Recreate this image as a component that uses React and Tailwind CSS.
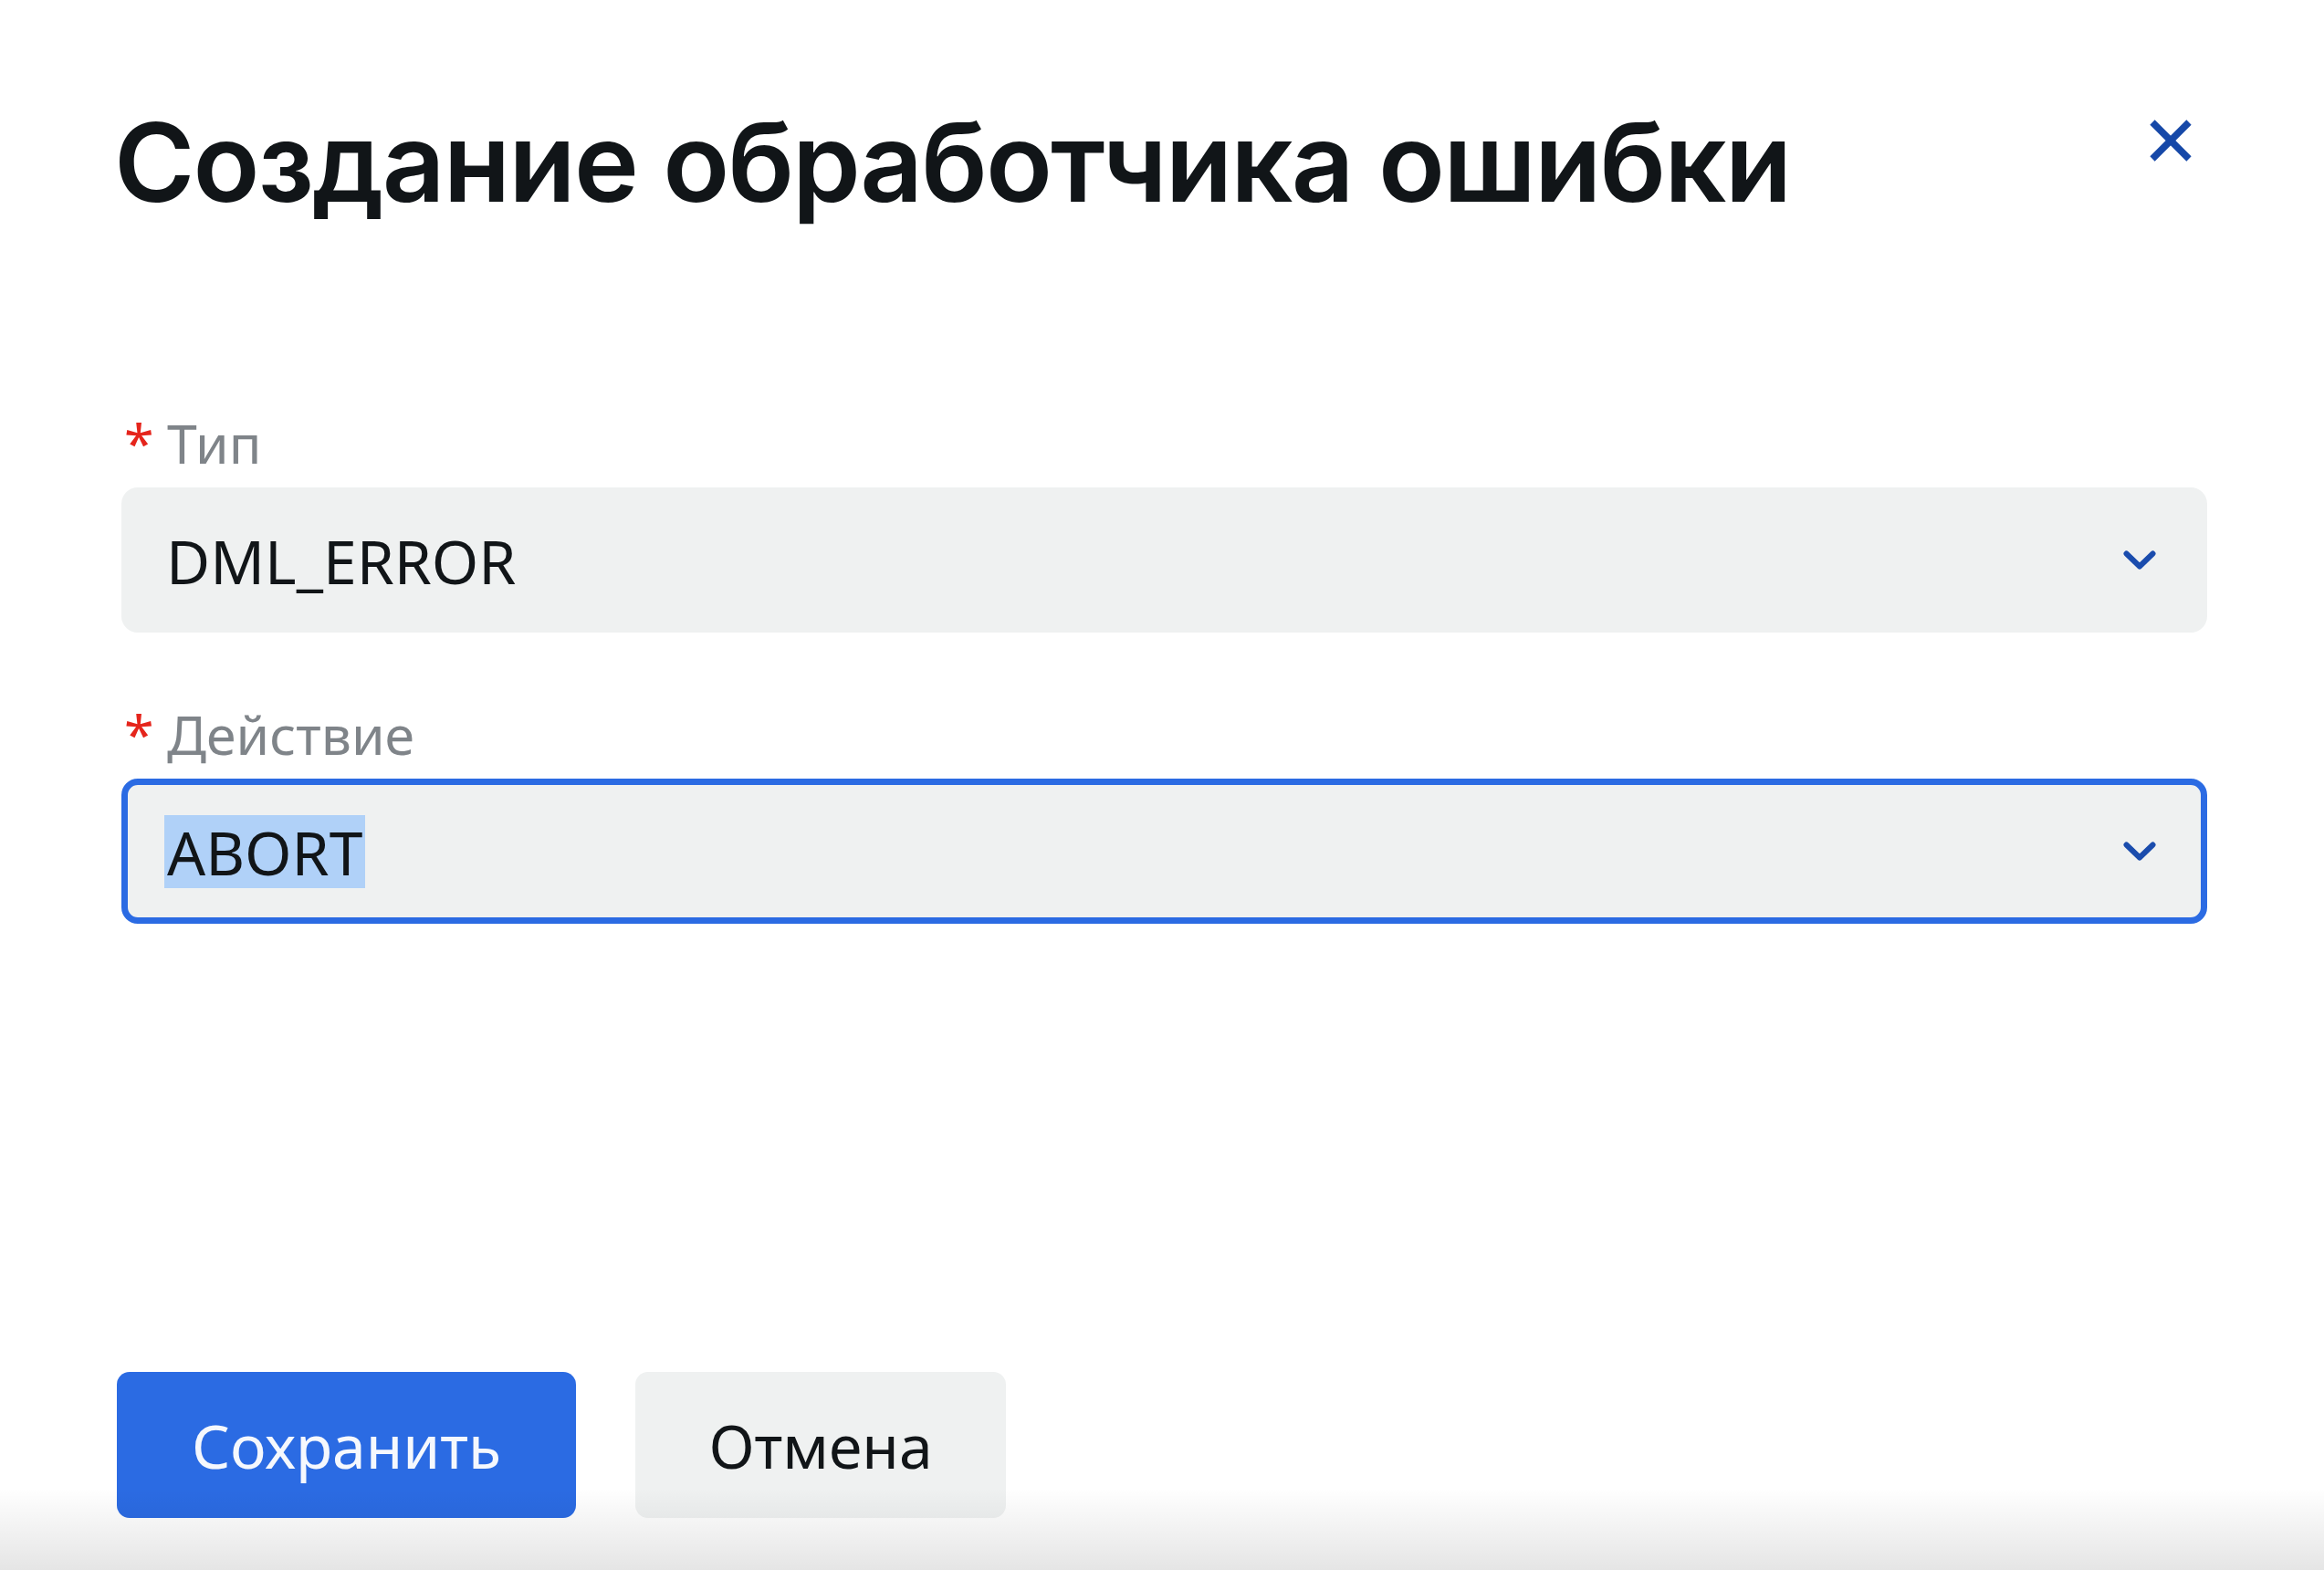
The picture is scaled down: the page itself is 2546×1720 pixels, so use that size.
import React from 'react';

function Chevron() {
  return (
    <svg width="36" height="22" viewBox="0 0 36 22" fill="none" stroke="#1a4cad" strokeWidth="6" strokeLinecap="round" strokeLinejoin="round" className="shrink-0">
      <path d="M3.5 3.5 L18 17.5 L32.5 3.5" />
    </svg>
  );
}

function Field({ label, value, focused }) {
  return (
    <div>
      <div className="flex items-center text-[59px] leading-[80px] mb-[9px]">
        <span className="text-[#e5251c] w-[50px] pl-[3px]">*</span>
        <span className="text-[#7f8489]">{label}</span>
      </div>
      <div
        className={`h-[159px] flex items-center justify-between rounded-[18px] bg-[#eff1f1] border-[7px] pl-[40px] pr-[49px] ${
          focused ? 'border-[#2b6be3]' : 'border-transparent'
        }`}
      >
        <span
          className={`text-[66px] leading-[80px] text-[#111518] ${focused ? 'bg-[#b0d1f8] px-[3px]' : 'pl-[2px]'}`}
        >
          {value}
        </span>
        <Chevron />
      </div>
    </div>
  );
}

export default function App() {
  return (
    <div
      className="relative h-[1720px] w-full bg-white overflow-hidden"
      style={{ fontFamily: '"Noto Sans", "Open Sans", sans-serif' }}
    >
      <div className="px-[128px] pt-[106px]">
        {/* header */}
        <div className="flex items-start justify-between">
          <h1
            className="-ml-[3px] text-[120px] leading-[144px] font-semibold tracking-[-1.9px] text-[#111518]"
            style={{ fontFamily: 'Inter, "Noto Sans", sans-serif' }}
          >
            Создание обработчика ошибки
          </h1>
          <button className="mt-[22px] mr-[14px]">
            <svg width="52" height="52" viewBox="0 0 52 52" fill="none" stroke="#1648a8" strokeWidth="7.5">
              <path d="M6 6 L46 46" />
              <path d="M46 6 L6 46" />
            </svg>
          </button>
        </div>

        {/* form */}
        <div className="mt-[195px] pl-[5px] flex flex-col gap-[71px]">
          <Field label="Тип" value="DML_ERROR" />
          <Field label="Действие" value="ABORT" focused />
        </div>

        {/* actions */}
        <div className="mt-[491px] flex gap-[65px]">
          <button className="w-[503px] h-[160px] rounded-[14px] bg-[#2b6be3] text-[#f5f8fd] text-[66px]">
            Сохранить
          </button>
          <button className="w-[406px] h-[160px] rounded-[14px] bg-[#eff1f1] text-[#111518] text-[66px]">
            Отмена
          </button>
        </div>
      </div>

      {/* bottom shade */}
      <div className="pointer-events-none absolute bottom-0 left-0 right-0 h-[90px] bg-gradient-to-b from-transparent to-[rgba(0,0,0,0.1)]" />
    </div>
  );
}
